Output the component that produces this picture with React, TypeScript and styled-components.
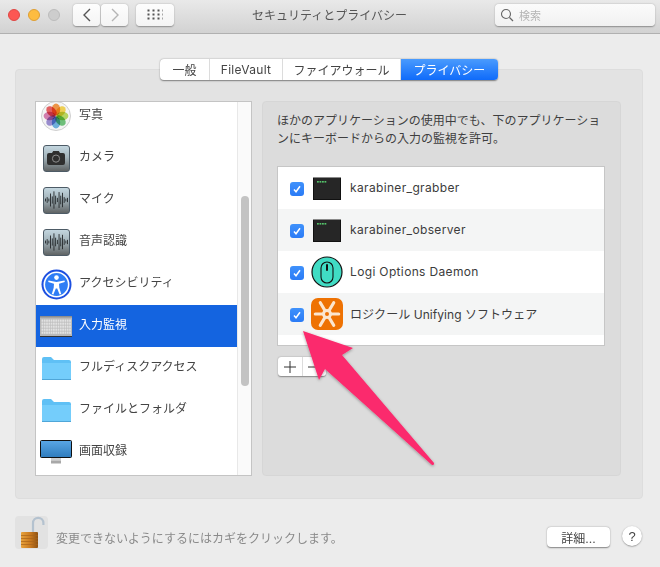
import React from "react";
import styled, { createGlobalStyle } from "styled-components";

const GlobalStyle = createGlobalStyle`
  html, body { margin: 0; padding: 0; background: #ececec; }
  body { font-family: Inter, "Noto Sans CJK JP", "Liberation Sans", sans-serif; }
`;

const Window = styled.div`
  position: relative;
  width: 660px;
  height: 567px;
  overflow: hidden;
  background: #ececec;
  color: #444;
  font-size: 12px;
`;

/* title bar */
const TitleBar = styled.div`
  height: 34px;
  display: flex;
  align-items: center;
  padding: 0 5px 4px 8px;
  box-sizing: border-box;
  background: linear-gradient(#e9e9e9, #d2d2d2);
  border-bottom: 1px solid #b0b0b0;
`;

const Light = styled.span<{ $color: string; $edge: string }>`
  width: 12px;
  height: 12px;
  box-sizing: border-box;
  border-radius: 50%;
  margin-right: 8px;
  background: ${(p) => p.$color};
  border: 1px solid ${(p) => p.$edge};
`;

const NavGroup = styled.div`
  display: flex;
  gap: 1px;
  margin-left: 5px;
`;

const BarButton = styled.div<{ $w: number }>`
  width: ${(p) => p.$w}px;
  height: 22px;
  display: flex;
  align-items: center;
  justify-content: center;
  background: linear-gradient(#fdfdfd, #f4f4f4);
  border-radius: 4px;
  box-shadow: 0 0.5px 1.5px rgba(0, 0, 0, 0.35);
`;

const GridButton = styled(BarButton)`
  margin-left: 8px;
`;

const Title = styled.div`
  flex: 1;
  text-align: center;
  padding-right: 10px;
  color: #555;
`;

const Search = styled.div`
  width: 160px;
  height: 22px;
  display: flex;
  align-items: center;
  gap: 5px;
  padding-left: 5px;
  box-sizing: border-box;
  background: linear-gradient(#fbfbfb, #f1f1f1);
  border-radius: 4px;
  box-shadow: 0 0.5px 1.5px rgba(0, 0, 0, 0.35);
  color: #b4b4b4;
  font-size: 11px;
`;

/* tabs and main box */
const Body = styled.div`
  padding: 25px 17px 0 15px;
  display: flex;
  flex-direction: column;
`;

const Tabs = styled.div`
  align-self: flex-start;
  margin-left: 145px;
  height: 21px;
  display: flex;
  z-index: 1;
  border-radius: 4px;
  background: #fff;
  box-shadow: 0 0.5px 1.5px rgba(0, 0, 0, 0.45);
`;

const Tab = styled.div<{ $active?: boolean; $w: number; $latin?: boolean }>`
  width: ${(p) => p.$w}px;
  display: flex;
  align-items: center;
  justify-content: center;
  box-sizing: border-box;
  letter-spacing: ${(p) => (p.$latin ? "0.3px" : "0")};
  color: ${(p) => (p.$active ? "#fff" : "#444")};
  border-right: ${(p) => (p.$active ? "none" : "1px solid #dcdcdc")};
  border-radius: ${(p) => (p.$active ? "0 4px 4px 0" : "0")};
  background: ${(p) => (p.$active ? "linear-gradient(#4a9bfd, #0f6bfa)" : "transparent")};
`;

const Box = styled.div`
  margin-top: -11px;
  height: 430px;
  box-sizing: border-box;
  padding: 31px 21px 22px 19px;
  display: flex;
  gap: 10px;
  background: #e3e3e3;
  border: 1px solid #dddddd;
  border-radius: 4px;
`;

/* left list */
const ListFrame = styled.div`
  width: 217px;
  height: 375px;
  box-sizing: border-box;
  display: flex;
  background: #fff;
  border: 1px solid #c4c4c4;
  overflow: hidden;
`;

const ListScroll = styled.div`
  width: 201px;
  margin-top: -7px;
`;

const ListRow = styled.div<{ $selected?: boolean }>`
  height: 42px;
  display: flex;
  align-items: center;
  gap: 7px;
  padding-left: 4px;
  background: ${(p) => (p.$selected ? "#1464e0" : "transparent")};
  color: ${(p) => (p.$selected ? "#fff" : "#444")};
`;

const ListLabel = styled.span`
  margin-bottom: 6px;
`;

const IconSlot = styled.div`
  width: 32px;
  height: 32px;
  flex: none;
  display: flex;
  align-items: center;
  justify-content: center;
`;

const Tile = styled.div`
  width: 27px;
  height: 27px;
  box-sizing: border-box;
  display: flex;
  align-items: center;
  justify-content: center;
  border-radius: 3px;
  border: 1px solid #4d5b66;
  background: linear-gradient(#c3d6df, #a3b3ba 45%, #5f6364);
`;

const ScrollTrack = styled.div`
  flex: 1;
  background: #fafafa;
  border-left: 1px solid #e8e8e8;
  padding: 94px 2px 0 3px;
`;

const ScrollThumb = styled.div`
  height: 190px;
  border-radius: 4px;
  background: #c3c3c3;
`;

/* right panel */
const Panel = styled.div`
  width: 359px;
  height: 375px;
  box-sizing: border-box;
  padding: 10px 16px 0 14px;
  background: #dcdcdc;
  border-radius: 4px;
  border: 1px solid #d6d6d6;
`;

const Lead = styled.p`
  margin: 0 0 18px;
  line-height: 18px;
  color: #3f3f3f;
  white-space: nowrap;
`;

const AppTable = styled.div`
  width: 328px;
  box-sizing: border-box;
  background: #fff;
  border: 1px solid #c6c6c6;
  padding-bottom: 10px;
`;

const AppRow = styled.div<{ $striped?: boolean; $latin?: boolean }>`
  height: 42px;
  display: flex;
  align-items: center;
  gap: 7px;
  padding-left: 12px;
  letter-spacing: ${(p) => (p.$latin ? "0.35px" : "0.05px")};
  background: ${(p) => (p.$striped ? "#f4f5f5" : "#fff")};
  color: #3c3c3c;
`;

const AppLabel = styled.span`
  margin-bottom: 2px;
`;

const Check = styled.span`
  width: 14px;
  height: 14px;
  flex: none;
  margin-top: 2px;
  display: flex;
  align-items: center;
  justify-content: center;
  border-radius: 3px;
  background: linear-gradient(#3f91fb, #2a7bf6);
`;

const PlusMinus = styled.div`
  width: 48px;
  height: 19px;
  margin: 11px 0 0 1px;
  display: flex;
  background: #fff;
  border-radius: 3px;
  box-shadow: 0 0.5px 1.5px rgba(0, 0, 0, 0.4);
`;

const PmCell = styled.div`
  flex: 1;
  display: flex;
  align-items: center;
  justify-content: center;
  & + & {
    border-left: 1px solid #dcdcdc;
  }
`;

/* footer */
const Footer = styled.div`
  height: 33px;
  margin-top: 17px;
  padding: 0 18px 0 15px;
  display: flex;
  align-items: flex-end;
`;

const LockTile = styled.div`
  width: 33px;
  height: 33px;
  flex: none;
  border-radius: 4px;
  background: #e2e2e2;
`;

const LockText = styled.div`
  flex: 1;
  margin-left: 8px;
  line-height: 20px;
  color: #8a8a8a;
`;

const DetailButton = styled.div`
  width: 63px;
  height: 20px;
  margin-bottom: 2px;
  display: flex;
  align-items: center;
  justify-content: center;
  background: #fff;
  border-radius: 4px;
  box-shadow: 0 0.5px 1.5px rgba(0, 0, 0, 0.45);
`;

const HelpButton = styled.div`
  width: 20px;
  height: 20px;
  margin: 0 0 3px 12px;
  display: flex;
  align-items: center;
  justify-content: center;
  background: #fff;
  border-radius: 50%;
  font-family: "Liberation Sans", sans-serif;
  font-size: 13px;
  box-shadow: 0 0.5px 1.5px rgba(0, 0, 0, 0.45);
`;

const ArrowLayer = styled.svg`
  position: absolute;
  left: 0;
  top: 0;
  pointer-events: none;
`;

/* drawings */
const PhotosIcon = () => {
  const petals = ["#f58a2b", "#f7d23a", "#b3d84a", "#5cbf6a", "#5aa9e0", "#8f7fd0", "#d56ea8", "#e8474a"];
  return (
    <svg width="30" height="30" viewBox="0 0 30 30">
      <circle cx="15" cy="15" r="14.5" fill="#f4f4f4" stroke="#cfcfcf" />
      {petals.map((c, i) => (
        <ellipse
          key={c}
          cx="15"
          cy="8.6"
          rx="4.2"
          ry="6"
          fill={c}
          opacity="0.85"
          style={{ mixBlendMode: "multiply" }}
          transform={`rotate(${i * 45} 15 15)`}
        />
      ))}
    </svg>
  );
};

const CameraIcon = () => (
  <Tile>
    <svg width="18" height="14" viewBox="0 0 18 14">
      <path d="M2 2h3l1.2-2h5.6L13 2h3a2 2 0 0 1 2 2v8a2 2 0 0 1-2 2H2a2 2 0 0 1-2-2V4a2 2 0 0 1 2-2z" fill="#2f2f2f" />
      <circle cx="9" cy="7.6" r="3.6" fill="none" stroke="#8d8d8d" />
    </svg>
  </Tile>
);

const WaveIcon = () => {
  const bars = [2, 4, 2, 9, 5, 12, 6, 3, 11, 6, 10, 4, 2, 3];
  return (
    <Tile>
      <svg width="25" height="18" viewBox="0 0 25 18">
        {bars.map((h, i) => (
          <rect key={i} x={1 + i * 1.7} y={9 - h * 0.72} width="0.9" height={h * 1.44} fill="#24282b" />
        ))}
      </svg>
    </Tile>
  );
};

const AccessIcon = () => (
  <svg width="31" height="31" viewBox="0 0 31 31">
    <circle cx="15.5" cy="15.5" r="15" fill="#1d4fe0" />
    <circle cx="15.5" cy="15.5" r="12.2" fill="#2f7df5" stroke="#fff" strokeWidth="1.6" />
    <circle cx="15.5" cy="8.6" r="2.3" fill="#fff" />
    <path d="M7.5 11.6l8 1.3 8-1.3.3 1.5-5.8 1.6.3 4 1.9 6.2-1.6.5-2.4-6h-1.4l-2.4 6-1.6-.5 1.9-6.2.3-4-5.8-1.6z" fill="#fff" />
  </svg>
);

const KeyboardIcon = () => {
  const keys: React.ReactNode[] = [];
  for (let r = 0; r < 5; r++) {
    for (let c = 0; c < 13; c++) {
      keys.push(<rect key={`${r}-${c}`} x={1.5 + c * 2.3} y={3.5 + r * 3} width="1.8" height="2.3" fill="#e2e2e2" />);
    }
  }
  return (
    <svg width="32" height="21" viewBox="0 0 32 21">
      <rect x="0" y="0" width="32" height="21" fill="#b9b9b9" />
      <rect x="0" y="0" width="32" height="1.500" fill="#8e8e8e" />
      <rect x="0" y="20" width="32" height="1" fill="#333" />
      {keys}
    </svg>
  );
};

const FolderIcon = () => (
  <svg width="31" height="25" viewBox="0 0 31 25">
    <path d="M1 3a2 2 0 0 1 2-2h7l3 3h15a2 2 0 0 1 2 2v16a2 2 0 0 1-2 2H3a2 2 0 0 1-2-2z" fill="#5fc0f5" />
    <path d="M1 7h29v15a2 2 0 0 1-2 2H3a2 2 0 0 1-2-2z" fill="#74cdfb" />
    <rect x="1" y="23" width="29" height="1" fill="#4fa6d8" />
  </svg>
);

const MonitorIcon = () => (
  <svg width="32" height="25" viewBox="0 0 32 25">
    <defs>
      <linearGradient id="screen" x1="0" y1="0" x2="0" y2="1">
        <stop offset="0" stopColor="#5aa7e6" />
        <stop offset="1" stopColor="#2f7cbd" />
      </linearGradient>
    </defs>
    <rect x="0.5" y="0.5" width="31" height="17" rx="1" fill="url(#screen)" stroke="#111" />
    <rect x="11" y="18" width="10" height="2.5" fill="#d0d0d0" />
    <rect x="11" y="20.5" width="10" height="3" fill="#a8a8a8" />
  </svg>
);

const TerminalIcon = () => (
  <svg width="28" height="23" viewBox="0 0 28 23">
    <rect x="0.5" y="0.5" width="27" height="22" fill="#262626" stroke="#111" />
    <rect x="0" y="0" width="28" height="1" fill="#8a8a8a" />
    {[4, 6.500, 9, 11.500].map((x) => (
      <rect key={x} x={x} y="4" width="1.800" height="1.600" fill="#55c46a" />
    ))}
  </svg>
);

const MouseIcon = () => (
  <svg width="32" height="32" viewBox="0 0 32 32">
    <circle cx="16" cy="16" r="15" fill="#40dcc4" stroke="#111" strokeWidth="1.2" />
    <rect x="10" y="6" width="12" height="21" rx="6" fill="#40dcc4" stroke="#111" strokeWidth="1.1" />
    <rect x="15" y="8" width="2" height="7" rx="1" fill="#111" />
  </svg>
);

const LogiIcon = () => (
  <svg width="32" height="32" viewBox="0 0 32 32">
    <rect x="0" y="0" width="32" height="32" rx="7" fill="#ee7203" />
    <g stroke="#fbe6cf" strokeWidth="3.200" strokeLinecap="round">
      <path d="M4.300 16H27.700M9.300 4.700L22.700 27.300M22.700 4.700L9.300 27.300" />
    </g>
    <circle cx="16" cy="16" r="5" fill="#fbe6cf" />
    <circle cx="16" cy="16" r="2" fill="#ee7203" />
  </svg>
);

const LockIcon = () => (
  <svg width="33" height="33" viewBox="0 0 33 33">
    <defs>
      <linearGradient id="brass" x1="0" y1="0" x2="1" y2="0">
        <stop offset="0" stopColor="#e8a33c" />
        <stop offset="0.55" stopColor="#c9791f" />
        <stop offset="1" stopColor="#8f5212" />
      </linearGradient>
    </defs>
    <path d="M18 17V7a5.200 5.200 0 0 1 10.400 0V9" fill="none" stroke="#b4c2cf" strokeWidth="2.200" />
    <rect x="6" y="16" width="17" height="16" rx="1" fill="url(#brass)" />
    {[19, 22, 25, 28].map((y) => (
      <rect key={y} x="6" y={y} width="17" height="0.700" fill="#a8631a" />
    ))}
  </svg>
);

const listItems: { label: string; icon: React.ReactNode; selected?: boolean }[] = [
  { label: "写真", icon: <PhotosIcon /> },
  { label: "カメラ", icon: <CameraIcon /> },
  { label: "マイク", icon: <WaveIcon /> },
  { label: "音声認識", icon: <WaveIcon /> },
  { label: "アクセシビリティ", icon: <AccessIcon /> },
  { label: "入力監視", icon: <KeyboardIcon />, selected: true },
  { label: "フルディスクアクセス", icon: <FolderIcon /> },
  { label: "ファイルとフォルダ", icon: <FolderIcon /> },
  { label: "画面収録", icon: <MonitorIcon /> },
];

const apps: { label: string; icon: React.ReactNode; latin?: boolean }[] = [
  { label: "karabiner_grabber", icon: <TerminalIcon />, latin: true },
  { label: "karabiner_observer", icon: <TerminalIcon />, latin: true },
  { label: "Logi Options Daemon", icon: <MouseIcon />, latin: true },
  { label: "ロジクール Unifying ソフトウェア", icon: <LogiIcon /> },
];

export default function App() {
  return (
    <Window>
      <GlobalStyle />
      <TitleBar>
        <Light $color="#fc5753" $edge="#df4744" />
        <Light $color="#fdbc40" $edge="#de9f34" />
        <Light $color="#cdcdcd" $edge="#bcbcbc" />
        <NavGroup>
          <BarButton $w={27}>
            <svg width="10" height="14" viewBox="0 0 10 14">
              <path d="M8 1L2 7l6 6" fill="none" stroke="#555" strokeWidth="1.400" />
            </svg>
          </BarButton>
          <BarButton $w={27}>
            <svg width="10" height="14" viewBox="0 0 10 14">
              <path d="M2 1l6 6-6 6" fill="none" stroke="#b5b5b5" strokeWidth="1.400" />
            </svg>
          </BarButton>
        </NavGroup>
        <GridButton $w={38}>
          <svg width="16" height="11" viewBox="0 0 16 11">
            {[0, 1, 2].map((r) =>
              [0, 1, 2, 3].map((c) => <rect key={`${r}${c}`} x={c * 5 + 0.500} y={r * 4 + 0.500} width="2" height="2" fill="#555" />)
            )}
          </svg>
        </GridButton>
        <Title>セキュリティとプライバシー</Title>
        <Search>
          <svg width="14" height="14" viewBox="0 0 14 14">
            <circle cx="6" cy="6" r="4.500" fill="none" stroke="#666" strokeWidth="1.100" />
            <path d="M9.500 9.500L13 13" stroke="#666" strokeWidth="1.200" />
          </svg>
          検索
        </Search>
      </TitleBar>

      <Body>
        <Tabs>
          <Tab $w={50}>一般</Tab>
          <Tab $w={73} $latin>FileVault</Tab>
          <Tab $w={118}>ファイアウォール</Tab>
          <Tab $w={97} $active>プライバシー</Tab>
        </Tabs>
        <Box>
          <ListFrame>
            <ListScroll>
              {listItems.map((item) => (
                <ListRow key={item.label} $selected={item.selected}>
                  <IconSlot>{item.icon}</IconSlot>
                  <ListLabel>{item.label}</ListLabel>
                </ListRow>
              ))}
            </ListScroll>
            <ScrollTrack>
              <ScrollThumb />
            </ScrollTrack>
          </ListFrame>
          <Panel>
            <Lead>
              ほかのアプリケーションの使用中でも、下のアプリケーショ
              <br />
              ンにキーボードからの入力の監視を許可。
            </Lead>
            <AppTable>
              {apps.map((app, i) => (
                <AppRow key={app.label} $striped={i % 2 === 1} $latin={app.latin}>
                  <Check>
                    <svg width="10" height="10" viewBox="0 0 10 10">
                      <path d="M2 5.500l2 2.200 4-5.400" fill="none" stroke="#fff" strokeWidth="1.500" />
                    </svg>
                  </Check>
                  <IconSlot>{app.icon}</IconSlot>
                  <AppLabel>{app.label}</AppLabel>
                </AppRow>
              ))}
            </AppTable>
            <PlusMinus>
              <PmCell>
                <svg width="12" height="12" viewBox="0 0 12 12">
                  <path d="M6 0v12M0 6h12" stroke="#333" strokeWidth="1" />
                </svg>
              </PmCell>
              <PmCell>
                <svg width="12" height="12" viewBox="0 0 12 12">
                  <path d="M0 6h12" stroke="#333" strokeWidth="1" />
                </svg>
              </PmCell>
            </PlusMinus>
          </Panel>
        </Box>
      </Body>

      <Footer>
        <LockTile>
          <LockIcon />
        </LockTile>
        <LockText>変更できないようにするにはカギをクリックします。</LockText>
        <DetailButton>詳細...</DetailButton>
        <HelpButton>?</HelpButton>
      </Footer>

      <ArrowLayer width="660" height="567" viewBox="0 0 660 567">
        <defs>
          <filter id="arrowShadow" x="-20%" y="-20%" width="140%" height="140%">
            <feDropShadow dx="0" dy="1" stdDeviation="1.500" floodColor="#000" floodOpacity="0.35" />
          </filter>
        </defs>
        <path
          d="M303 331L353 348L342 355L434 463Q434.500 465 432 465L325 369L319 380Z"
          fill="#fb2a6d"
          filter="url(#arrowShadow)"
        />
      </ArrowLayer>
    </Window>
  );
}
